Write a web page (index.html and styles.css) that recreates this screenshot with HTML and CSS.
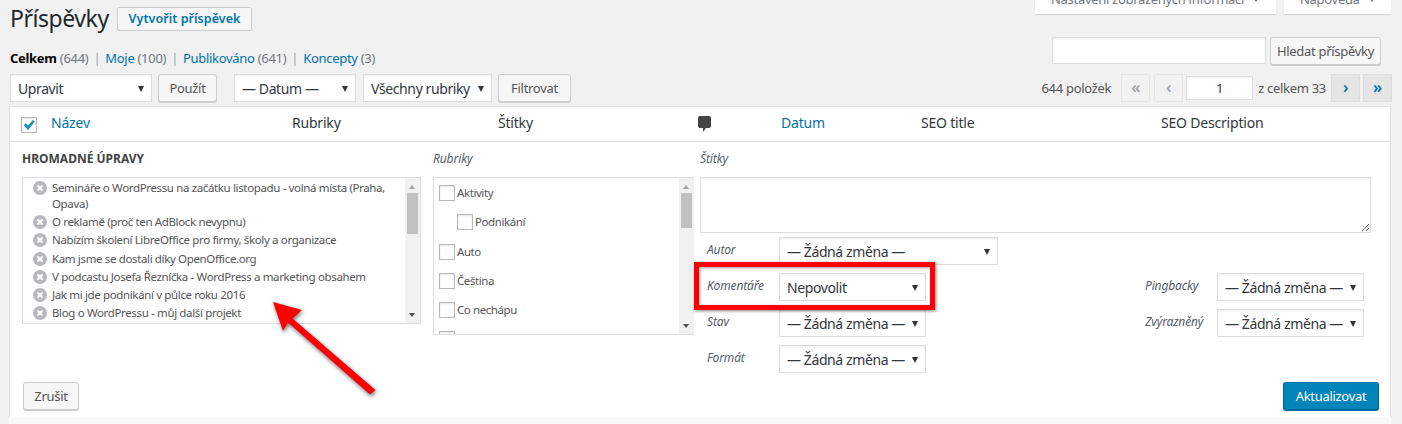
FILE: index.html
```html
<!DOCTYPE html>
<html lang="cs">
<head>
<meta charset="utf-8">
<title>Příspěvky</title>
<link rel="stylesheet" href="styles.css">
</head>
<body>
<div class="page">
  <header class="top">
    <div class="title-row">
      <h1>Příspěvky</h1>
      <a class="add-new">Vytvořit příspěvek</a>
    </div>
    <div class="meta">
      <a class="meta-tab meta-wide">Nastavení zobrazených informací <i class="caret"></i></a>
      <a class="meta-tab meta-help">Nápověda <i class="caret"></i></a>
    </div>
  </header>

  <div class="filter-row">
    <ul class="subsub">
      <li><b>Celkem</b> <span>(644)</span></li>
      <li><a>Moje</a> <span>(100)</span></li>
      <li><a>Publikováno</a> <span>(641)</span></li>
      <li><a>Koncepty</a> <span>(3)</span></li>
    </ul>
    <div class="search">
      <input class="search-input" type="text" aria-label="Hledat">
      <button class="btn search-btn">Hledat příspěvky</button>
    </div>
  </div>

  <div class="tablenav">
    <span class="sel w-action"><select><option>Upravit</option></select></span>
    <button class="btn apply">Použít</button>
    <span class="sel w-date"><select><option>— Datum —</option></select></span>
    <span class="sel w-cat"><select><option>Všechny rubriky</option></select></span>
    <button class="btn filter">Filtrovat</button>
    <div class="pager">
      <span class="count">644 položek</span>
      <a class="pg off">«</a>
      <a class="pg off">‹</a>
      <input class="pg-input" type="text" value="1" aria-label="Stránka">
      <span class="of">z celkem 33</span>
      <a class="pg on">›</a>
      <a class="pg on">»</a>
    </div>
  </div>

  <section class="table">
    <div class="thead">
      <div class="th-check"><span class="check-all"><svg viewBox="0 0 16 16" width="16" height="16"><path d="M2.800 8.300l2-2 2.100 2.500L11.800 2.900l1.900 1.500-6.600 8.800z" fill="#1e8cbe"/></svg></span></div>
      <a class="th">Název</a>
      <span class="th">Rubriky</span>
      <span class="th">Štítky</span>
      <span class="th"><svg class="bubble" viewBox="0 0 13 16" width="13" height="16"><path d="M2 0h9a2 2 0 0 1 2 2v8a2 2 0 0 1-2 2H8l-3 4v-4H2a2 2 0 0 1-2-2V2a2 2 0 0 1 2-2z" fill="#444"/></svg></span>
      <a class="th">Datum</a>
      <span class="th">SEO title</span>
      <span class="th">SEO Description</span>
    </div>

    <div class="bulk">
      <div class="cols">
        <div class="col-posts">
          <h2 class="bulk-title">HROMADNÉ ÚPRAVY</h2>
          <div class="box post-box">
            <ul class="posts">
              <li><svg class="x" viewBox="0 0 14 14"><use href="#del"/></svg><span>Semináře o WordPressu na začátku listopadu - volná místa (Praha, Opava)</span></li>
              <li><svg class="x" viewBox="0 0 14 14"><use href="#del"/></svg><span>O reklamě (proč ten AdBlock nevypnu)</span></li>
              <li><svg class="x" viewBox="0 0 14 14"><use href="#del"/></svg><span>Nabízím školení LibreOffice pro firmy, školy a organizace</span></li>
              <li><svg class="x" viewBox="0 0 14 14"><use href="#del"/></svg><span>Kam jsme se dostali díky OpenOffice.org</span></li>
              <li><svg class="x" viewBox="0 0 14 14"><use href="#del"/></svg><span>V podcastu Josefa Řezníčka - WordPress a marketing obsahem</span></li>
              <li><svg class="x" viewBox="0 0 14 14"><use href="#del"/></svg><span>Jak mi jde podnikání v půlce roku 2016</span></li>
              <li><svg class="x" viewBox="0 0 14 14"><use href="#del"/></svg><span>Blog o WordPressu - můj další projekt</span></li>
            </ul>
            <div class="scrollbar"><i class="up"></i><b class="thumb thumb-posts"></b><i class="down"></i></div>
          </div>
        </div>

        <div class="col-cats">
          <div class="col-label">Rubriky</div>
          <div class="box cat-box">
            <ul class="cats">
              <li><i class="cb"></i>Aktivity</li>
              <li class="sub"><i class="cb"></i>Podnikání</li>
              <li><i class="cb"></i>Auto</li>
              <li><i class="cb"></i>Čeština</li>
              <li><i class="cb"></i>Co nechápu</li>
              <li><i class="cb"></i></li>
            </ul>
            <div class="scrollbar"><i class="up"></i><b class="thumb thumb-cats"></b><i class="down"></i></div>
          </div>
        </div>

        <div class="col-tags">
          <div class="col-label">Štítky</div>
          <textarea class="tags" aria-label="Štítky"></textarea>
          <div class="fields">
            <div class="fields-left">
              <label class="field"><span>Autor</span><span class="sel w-author"><select><option>— Žádná změna —</option></select></span></label>
              <label class="field"><span>Komentáře</span><span class="sel w-field"><select><option>Nepovolit</option></select></span></label>
              <label class="field"><span>Stav</span><span class="sel w-field"><select><option>— Žádná změna —</option></select></span></label>
              <label class="field"><span>Formát</span><span class="sel w-field"><select><option>— Žádná změna —</option></select></span></label>
            </div>
            <div class="fields-right">
              <label class="field"><span>Pingbacky</span><span class="sel w-field"><select><option>— Žádná změna —</option></select></span></label>
              <label class="field"><span>Zvýrazněný</span><span class="sel w-field"><select><option>— Žádná změna —</option></select></span></label>
            </div>
          </div>
        </div>
      </div>

      <div class="actions">
        <button class="btn cancel">Zrušit</button>
        <button class="btn primary">Aktualizovat</button>
      </div>
    </div>
  </section>
  <div class="next-row"></div>

  <div class="callout"></div>
  <svg class="arrow" viewBox="0 0 1402 424" width="1402" height="424" aria-hidden="true">
    <polygon points="273,302 302,310 292.500,318.500 375.500,390 370,394.500 288,322.500 283,331" fill="#f00"/>
  </svg>
</div>

<svg class="defs" width="0" height="0" aria-hidden="true">
  <symbol id="del" viewBox="0 0 14 14">
    <circle cx="7" cy="7" r="7" fill="#b4b9be"/>
    <path d="M4.500 4.500l5 5m0-5l-5 5" stroke="#fff" stroke-width="2.200" fill="none"/>
  </symbol>
</svg>
</body>
</html>
```

FILE: styles.css
```css
* { box-sizing: border-box; }
html, body { margin: 0; height: 424px; overflow: hidden; }
body {
  background: #f1f1f1;
  color: #444;
  font: 13px/1.4 "Noto Sans", "Open Sans", sans-serif;
}
a { color: #0073aa; text-decoration: none; }
ul { list-style: none; margin: 0; padding: 0; }
.defs { position: absolute; }
.page { position: relative; height: 424px; padding: 0 11px 0 10px; overflow: hidden; }

/* top */
.top { display: flex; justify-content: space-between; height: 37px; }
.title-row { display: flex; align-items: center; height: 37px; }
h1 { margin: 0 9px 0 0; width: 98px; font-size: 23px; font-weight: 400; line-height: 30px; color: #23282d; letter-spacing: -.45px; position: relative; top: -1px; white-space: nowrap; }
.add-new {
  height: 24px; line-height: 22px; font-size: 12.500px; font-weight: 600;
  border: 1px solid #ccc; border-radius: 2px; background: #f7f7f7; letter-spacing: .05px;
  position: relative; top: .5px; width: 135px; text-align: center; white-space: nowrap;
}
.meta { display: flex; gap: 8px; height: 14px; align-items: flex-end; }
.meta-tab {
  display: block; height: 28px; padding: 0 16px; line-height: 26px; background: #fff; color: #72777c;
  box-shadow: 0 1px 1px rgba(0,0,0,.1); white-space: nowrap; flex: none; letter-spacing: -.3px;
}
.meta-wide { width: 241px; }
.meta-help { width: 107px; }
.caret { display: inline-block; border: 3px solid transparent; border-top: 4px solid #72777c; border-bottom: 0; margin-left: 6px; vertical-align: 2px; }

/* filter row */
.filter-row { display: flex; justify-content: space-between; align-items: center; height: 28px; }
.subsub { display: flex; color: #666; font-size: 13px; letter-spacing: -.3px; margin-top: 14px; }
.subsub li { white-space: nowrap; color: #72777c; }
.subsub li + li::before { content: "|"; color: #a0a5aa; margin: 0 5px; }
.subsub b { color: #000; font-weight: 700; }
.search { display: flex; gap: 4px; padding-right: 10px; }
.search-input { width: 214px; height: 27px; }
input {
  border: 1px solid #ddd; background: #fff; box-shadow: inset 0 1px 2px rgba(0,0,0,.07);
  font: inherit; color: #32373c; margin: 0; outline: 0;
}

/* buttons */
.btn {
  height: 28px; padding: 0 10px; margin: 0; border: 1px solid #ccc; border-radius: 3px; background: #f7f7f7;
  box-shadow: 0 1px 0 #ccc; color: #555; font: inherit; letter-spacing: -.3px; white-space: nowrap;
}
.search-btn { width: 111px; padding: 0; }
.apply { width: 59px; padding: 0; margin-left: 6px; }
.filter { width: 73px; padding: 0; margin-left: 6px; }
.cancel { width: 56px; padding: 0; }
.primary { width: 96px; padding: 0; background: #0085ba; border-color: #0073aa #006799 #006799; box-shadow: 0 1px 0 #006799; color: #fff; }

/* selects */
.sel { position: relative; display: inline-block; height: 28px; flex: none; }
.sel::after {
  content: ""; position: absolute; right: 8px; top: 12px; pointer-events: none;
  border-left: 3.500px solid transparent; border-right: 3.500px solid transparent; border-top: 6px solid #333;
}
.sel select {
  appearance: none; -webkit-appearance: none; display: block; width: 100%; height: 100%; margin: 0;
  padding: 0 7px; border: 1px solid #ddd; border-radius: 0; background: #fff; color: #32373c;
  box-shadow: inset 0 1px 2px rgba(0,0,0,.07); font: 14px "Noto Sans", "Open Sans", sans-serif; letter-spacing: -.4px; outline: 0;
}
.w-action { width: 142px; }
.w-date { width: 122px; margin-left: 17px; }
.w-cat { width: 129px; margin-left: 7px; }
.w-author { width: 219px; }
.w-field { width: 147px; }

/* tablenav */
.tablenav { display: flex; align-items: center; height: 28px; margin-top: 9px; }
.pager { margin-left: auto; margin-right: -1px; display: flex; align-items: center; color: #555; letter-spacing: -.3px; }
.count { margin-right: 10px; }
.pg {
  display: block; width: 29px; height: 28px; border: 1px solid #ddd; text-align: center; line-height: 24px;
  font-size: 16px; font-weight: 600; background: #e5e5e5; color: #0073aa;
}
.pg.off { background: #f1f1f1; border-color: #e5e5e5; color: #a0a5aa; margin-right: 4px; }
.pg.on + .pg.on { margin-left: 3px; }
.pg-input { width: 67px; height: 24px; text-align: center; margin-left: -1px; }
.of { margin: 0 5px; }

/* table */
.table { margin: 4px 0 0 -1px; background: #fff; border: 1px solid #e5e5e5; border-bottom: 0; height: 311px; }
.next-row { height: 8px; margin-left: -1px; background: #f9f9f9; }
.thead {
  display: grid; grid-template-columns: 41px 241px 206px 200px 83px 140px 240px 1fr;
  align-items: center; height: 35px; border-bottom: 1px solid #e1e1e1; font-size: 14px; letter-spacing: -.2px; color: #32373c;
}
.th { margin-top: -2px; }
.th-check { padding: 2px 0 0 11px; }
.check-all {
  display: block; width: 16px; height: 16px; border: 1px solid #b4b9be; background: #fff;
  box-shadow: inset 0 1px 2px rgba(0,0,0,.1);
}
.check-all svg { display: block; margin: -1px; }
.bubble { display: block; margin-top: 2px; }

/* inline edit */
.bulk { display: flex; flex-direction: column; height: 275px; padding: 0 11px 7px 12px; }
.cols { display: flex; flex: 1; }
.col-posts { width: 399px; }
.col-cats { width: 261px; margin-left: 12px; }
.col-tags { width: 671px; margin-left: 6px; }
.bulk-title { margin: 0; height: 35px; line-height: 33px; font-size: 12px; font-weight: 700; color: #444; letter-spacing: 0; }
.col-label { height: 35px; line-height: 33px; font-size: 12px; font-style: italic; color: #555d66; letter-spacing: -.1px; }
.box { display: flex; border: 1px solid #ddd; overflow: hidden; background: #fff; }
.post-box { height: 147px; }
.cat-box { height: 158px; border-right: 0; }
.posts { flex: 1; padding: 2px 0 0 10px; font-size: 11.500px; line-height: 16px; color: #555; letter-spacing: -.36px; }
.posts li { display: flex; gap: 5px; padding-bottom: 2.200px; align-items: flex-start; }
.x { width: 14px; height: 14px; flex: none; margin-top: 1px; }
.scrollbar {
  position: relative; flex: none; width: 15px; background: #f1f1f1;
}
.up, .down { position: absolute; left: 4px; border-left: 3.500px solid transparent; border-right: 3.500px solid transparent; }
.up { top: 7px; border-bottom: 4px solid #a3a3a3; }
.down { bottom: 6px; border-top: 4px solid #505050; }
.thumb { position: absolute; left: 2px; width: 11px; background: #c1c1c1; }
.thumb-posts { top: 15px; height: 41px; }
.thumb-cats { top: 15px; height: 35px; }
.cats { flex: 1; padding: 7px 0 0 5px; font-size: 11.500px; color: #555; letter-spacing: -.42px; }
.cats li { display: flex; gap: 2px; align-items: center; height: 16px; margin-bottom: 13.300px; }
.cats .sub { padding-left: 18px; }
.cb { display: block; flex: none; width: 16px; height: 16px; border: 1px solid #b4b9be; background: #fff; box-shadow: inset 0 1px 2px rgba(0,0,0,.1); }
.tags {
  display: block; width: 671px; height: 56px; margin: 0 0 4px; border: 1px solid #ddd; background: #fff;
  box-shadow: inset 0 1px 2px rgba(0,0,0,.07); outline: 0;
}
.fields { display: flex; justify-content: space-between; padding: 0 7px; }
.fields-right { margin-top: 36px; }
.field { display: flex; align-items: center; margin-bottom: 8px; font-size: 12px; font-style: italic; color: #555d66; letter-spacing: -.15px; }
.field > span:first-child { width: 72px; margin-top: -2px; }
.actions { display: flex; justify-content: space-between; padding: 0 0 0 1px; }

/* annotation */
.callout {
  position: absolute; left: 694px; top: 262px; width: 241px; height: 48px; border: 5px solid #f00;
  box-shadow: 1px 1px 3px rgba(0,0,0,.5), inset 1px 1px 3px rgba(0,0,0,.4);
}
.arrow { position: absolute; left: 0; top: 0; pointer-events: none; filter: drop-shadow(1px 2px 2px rgba(0,0,0,.55)); }
```
